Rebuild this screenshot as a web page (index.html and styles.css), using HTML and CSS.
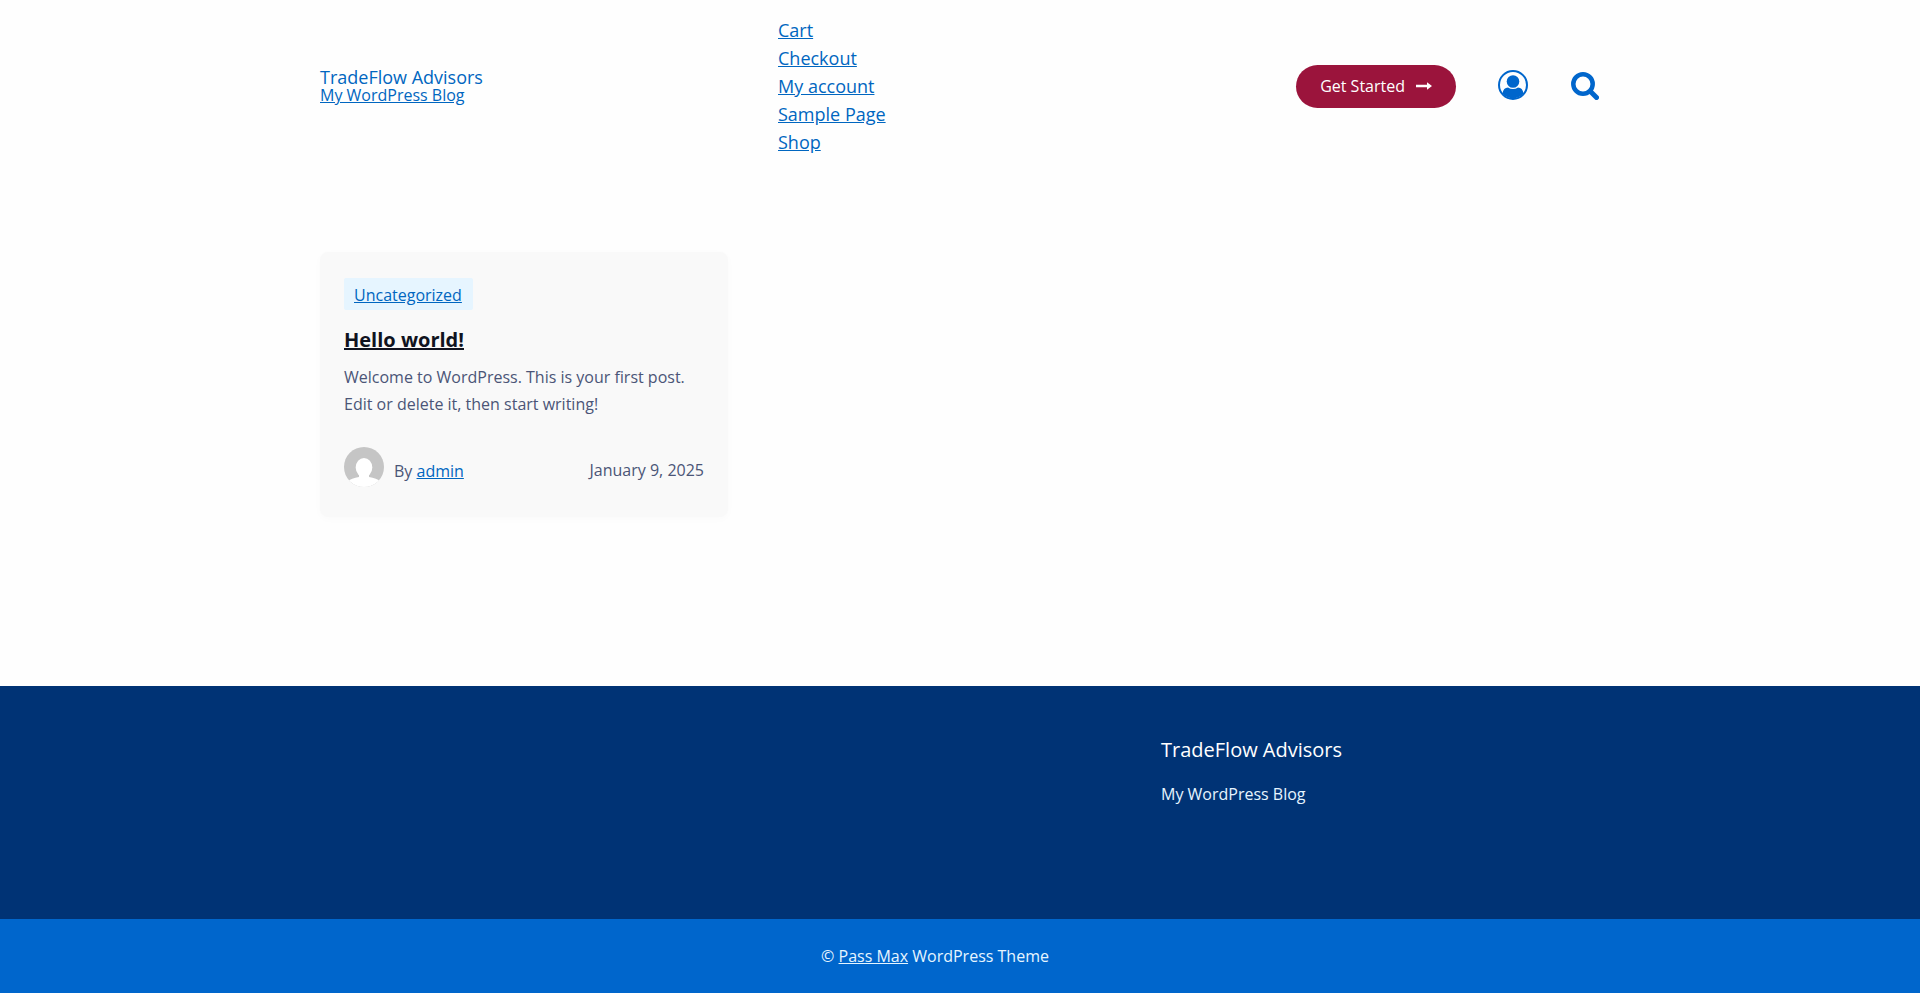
FILE: index.html
```html
<!DOCTYPE html>
<html lang="en">
<head>
<meta charset="utf-8">
<meta name="viewport" content="width=device-width, initial-scale=1">
<title>TradeFlow Advisors – My WordPress Blog</title>
<link rel="stylesheet" href="styles.css">
</head>
<body>
<header class="container site-header">
  <a class="brand" href="#">
    <span class="brand-name">TradeFlow Advisors</span>
    <span class="brand-tagline">My WordPress Blog</span>
  </a>
  <nav aria-label="Primary">
    <ul class="nav-list">
      <li><a href="#">Cart</a></li>
      <li><a href="#">Checkout</a></li>
      <li><a href="#">My account</a></li>
      <li><a href="#">Sample Page</a></li>
      <li><a href="#">Shop</a></li>
    </ul>
  </nav>
  <div class="actions">
    <a class="cta" href="#">Get Started
      <svg width="16" height="10" viewBox="0 0 16 10" aria-hidden="true"><path d="M0 3.8h11V1.2L16 5l-5 3.8V6.2H0z" fill="currentColor"/></svg>
    </a>
    <a class="account" href="#" aria-label="Account">
      <svg width="30" height="30" viewBox="0 0 30 30" aria-hidden="true">
        <circle cx="15" cy="15" r="14" fill="none" stroke="currentColor" stroke-width="2"/>
        <circle cx="15" cy="11.5" r="6.3" fill="currentColor"/>
        <path d="M4.500 23.500C5 19.500 7 17.400 10 17.400Q12.300 19 15 19T20 17.400C23 17.400 25 19.500 25.500 23.500A14 14 0 0 1 4.500 23.500Z" fill="currentColor"/>
      </svg>
    </a>
    <button class="search" type="button" aria-label="Search">
      <svg width="28" height="28" viewBox="0 0 28 28" aria-hidden="true">
        <circle cx="12" cy="12" r="9.700" fill="none" stroke="currentColor" stroke-width="4.500"/>
        <path d="M19.500 19.500l6 6" stroke="currentColor" stroke-width="5" stroke-linecap="round"/>
      </svg>
    </button>
  </div>
</header>
<main class="container posts">
  <article class="card">
    <a class="category" href="#">Uncategorized</a>
    <h2 class="card-title"><a href="#">Hello world!</a></h2>
    <p class="excerpt">Welcome to WordPress. This is your first post. Edit or delete it, then start writing!</p>
    <div class="meta">
      <svg class="avatar" width="40" height="40" viewBox="0 0 40 40" role="img" aria-label="admin">
        <clipPath id="round"><circle cx="20" cy="20" r="20"/></clipPath>
        <g clip-path="url(#round)">
          <path fill="#c5c5c5" d="M0 0h40v40H0z"/>
          <ellipse cx="20" cy="20.500" rx="8.300" ry="9.500" fill="#fff"/>
          <path fill="#fff" d="M15 27h10v3c5 1 9 2 12 5v5H3v-5c3-3 7-4 12-5z"/>
        </g>
      </svg>
      <span class="author">By <a href="#">admin</a></span>
      <time class="date" datetime="2025-01-09">January 9, 2025</time>
    </div>
  </article>
</main>
<footer class="site-footer">
  <div class="footer-main">
    <div class="container footer-grid">
      <div class="about">
        <h2 class="about-title">TradeFlow Advisors</h2>
        <p class="about-text">My WordPress Blog</p>
      </div>
    </div>
  </div>
  <p class="copyright">© <a href="#">Pass Max</a> WordPress Theme</p>
</footer>
</body>
</html>
```
FILE: styles.css
```css
* { box-sizing: border-box; }
body {
  margin: 0;
  min-height: 100vh;
  display: flex;
  flex-direction: column;
  background: #fefefe;
  color: #4b5577;
  font: 16px/27px "Open Sans", sans-serif;
}
h2, p, ul { margin: 0; padding: 0; }
a { color: #0066c0; }
svg { display: block; }
.container {
  width: 100%;
  max-width: 1280px;
  margin: 0 auto;
}
.site-header {
  display: grid;
  grid-template-columns: 458px 1fr auto;
  align-items: center;
  padding: 16px 0;
}
.brand {
  display: flex;
  flex-direction: column;
  line-height: 18px;
  text-decoration: none;
}
.brand-name { font-size: 18px; }
.brand-tagline { text-decoration: underline; }
.nav-list {
  list-style: none;
  font-size: 18px;
  line-height: 28px;
}
.actions { display: flex; align-items: center; }
.cta {
  display: flex;
  align-items: center;
  gap: 11px;
  padding: 8px 24px;
  border-radius: 22px;
  background: #9b143c;
  color: #fff;
  text-decoration: none;
}
.account { margin: 0 43px 0 42px; padding-bottom: 2px; color: #0066cc; }
.search {
  margin-right: 1px;
  padding: 0;
  border: 0;
  background: none;
  color: #0066cc;
}
.posts {
  flex: 1;
  display: grid;
  grid-template-columns: repeat(3, 1fr);
  gap: 28px;
  align-items: start;
  padding: 80px 0;
}
.card {
  padding: 26px 24px 30px;
  border-radius: 8px;
  background: #f9f9f9;
  box-shadow: 0 2px 8px rgba(0, 0, 0, 0.02);
}
.category {
  display: inline-block;
  padding: 4px 11px 1px 10px;
  border-radius: 2px;
  background: #e6f5ff;
}
.card-title {
  margin: 14px 0 8px;
  font-size: 20px;
  line-height: 32px;
}
.card-title a { color: #101320; }
.meta {
  display: flex;
  align-items: center;
  gap: 10px;
  margin-top: 29px;
}
.author { padding-top: 8px; }
.date { margin-left: auto; padding-top: 6px; }
.footer-main {
  padding: 48px 0;
  background: #003375;
  color: #fff;
}
.footer-grid {
  display: grid;
  grid-template-columns: 841px 1fr;
  min-height: 137px;
}
.about { grid-column: 2; }
.about-title {
  font-size: 20px;
  font-weight: 500;
  line-height: 32px;
}
.about-text { margin-top: 15px; color: #e6f5ff; }
.copyright {
  padding: 24px 50px 23px 0;
  background: #0066cc;
  color: #e6f5ff;
  text-align: center;
}
.copyright a { color: inherit; }
```
